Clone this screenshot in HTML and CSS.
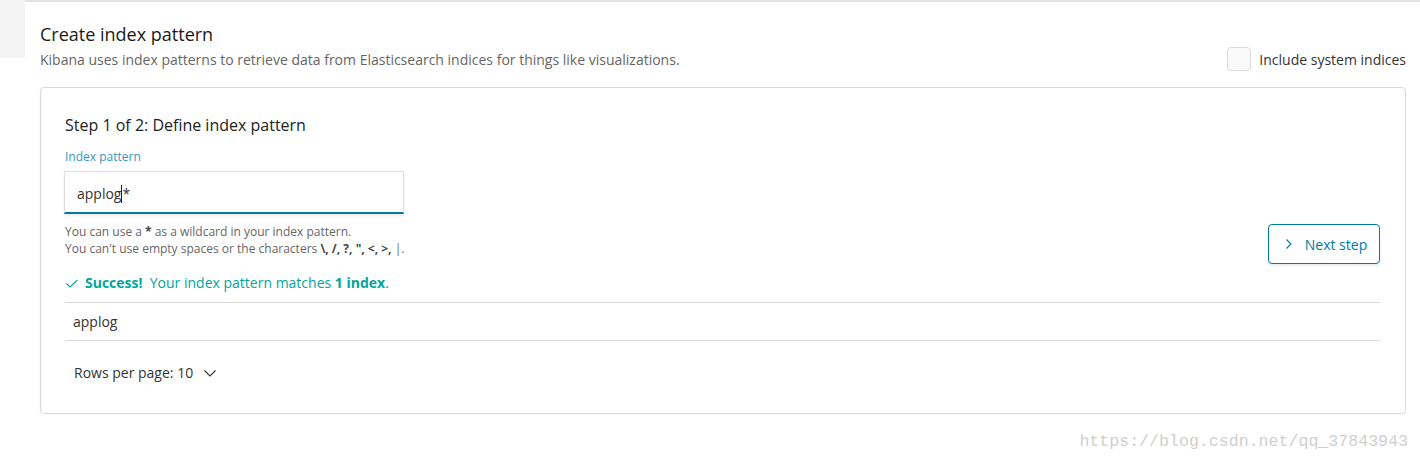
FILE: index.html
```html
<!DOCTYPE html>
<html lang="en">
<head>
  <meta charset="UTF-8" />
  <title>Create index pattern</title>
  <link rel="stylesheet" href="styles.css">
</head>
<body>
  <div class="page">
    <div class="nav-stub"></div>

    <main class="content">
      <header class="page-header">
        <div>
          <h1 class="page-title">Create index pattern</h1>
          <p class="page-desc">Kibana uses index patterns to retrieve data from Elasticsearch indices for things like visualizations.</p>
        </div>
        <label class="checkbox">
          <span class="checkbox-box"></span>
          <span>Include system indices</span>
        </label>
      </header>

      <section class="panel">
        <h2 class="step-title">Step 1 of 2: Define index pattern</h2>

        <div class="step-row">
          <div class="form-row">
            <div class="field-label">Index pattern</div>
            <div class="field-input">applog<span class="caret"></span>*</div>
            <div class="field-help">
              You can use a <b>*</b> as a wildcard in your index pattern.<br>
              You can't use empty spaces or the characters <b>\, /, ?, ", &lt;, &gt;,</b> |.
            </div>
          </div>
          <button class="next-btn">
            <svg width="16" height="16" viewBox="0 0 16 16"><path d="M5.5 3.5 L10 8 L5.5 12.5" fill="none" stroke="currentColor" stroke-width="1.1"/></svg>
            <span>Next step</span>
          </button>
        </div>

        <div class="status">
          <svg width="14" height="14" viewBox="0 0 14 14"><path d="M1.5 7.5 L5 11 L12.5 4" fill="none" stroke="currentColor" stroke-width="1.1"/></svg>
          <b>Success!</b>&nbsp; Your index pattern matches&nbsp;<b>1 index</b>.
        </div>

        <div class="index-table">
          <div class="index-row">applog</div>
        </div>

        <div class="pagination">
          Rows per page: 10
          <svg width="14" height="10" viewBox="0 0 14 10"><path d="M1.5 2.5 L7 8 L12.5 2.5" fill="none" stroke="currentColor" stroke-width="1.1"/></svg>
        </div>
      </section>
    </main>
  </div>

  <div class="watermark">https://blog.csdn.net/qq_37843943</div>
</body>
</html>
```

FILE: styles.css
```css
body {
  margin: 0;
  font-family: 'Open Sans', sans-serif;
  background: #fff;
  color: #333;
}
.page {
  display: flex;
  align-items: flex-start;
}
.nav-stub {
  width: 25px;
  height: 58px;
  background: #f3f3f3;
  flex-shrink: 0;
}
.content {
  flex: 1;
  border-top: 2px solid #e2e2e2;
  padding: 20px 14px 0 15px;
}
.page-header {
  display: flex;
  justify-content: space-between;
  align-items: flex-end;
}
.page-title {
  margin: 0;
  font-size: 18px;
  line-height: 24px;
  font-weight: 400;
  color: #1a1a1a;
}
.page-desc {
  margin: 4px 0 0;
  font-size: 14px;
  line-height: 20px;
  color: #666;
}
.checkbox {
  display: flex;
  align-items: center;
  gap: 8px;
  font-size: 14px;
  color: #333;
  margin-bottom: -1px;
}
.checkbox-box {
  width: 22px;
  height: 22px;
  border: 1px solid #dcdcdc;
  border-radius: 4px;
  background: #fafafa;
}
.panel {
  margin-top: 17px;
  border: 1px solid #d9d9d9;
  border-radius: 4px;
  box-shadow: 0 1px 2px rgba(0, 0, 0, 0.06);
  padding: 25px 25px 30px 24px;
}
.step-title {
  margin: 0 0 11px;
  font-size: 16px;
  line-height: 24px;
  font-weight: 400;
  color: #222;
}
.step-row {
  display: flex;
  justify-content: space-between;
  align-items: flex-end;
}
.form-row {
  padding-bottom: 7px;
}
.field-label {
  font-size: 12px;
  line-height: 18px;
  color: #3896c0;
  margin-bottom: 5px;
}
.field-input {
  width: 326px;
  height: 36px;
  padding: 4px 0 0 12px;
  margin-left: -1px;
  border: 1px solid #dedede;
  border-bottom: 2px solid #0079a5;
  box-shadow: 0 2px 3px rgba(0, 0, 0, 0.08);
  font-size: 14px;
  line-height: 36px;
  color: #333;
}
.caret {
  display: inline-block;
  width: 0;
  height: 18px;
  border-left: 1px solid #222;
  vertical-align: -4px;
}
.field-help {
  margin-top: 9px;
  font-size: 12px;
  line-height: 17px;
  color: #666;
}
.field-help b {
  color: #444;
}
.next-btn {
  display: inline-flex;
  align-items: center;
  justify-content: center;
  gap: 8px;
  box-sizing: border-box;
  width: 112px;
  height: 40px;
  padding: 0 8px;
  white-space: nowrap;
  background: #fff;
  border: 1px solid #0079a5;
  border-radius: 4px;
  box-shadow: 0 2px 2px rgba(0, 0, 0, 0.08);
  color: #0079a5;
  font-family: 'Open Sans', sans-serif;
  font-size: 14px;
}
.status {
  display: flex;
  align-items: center;
  margin-top: 9px;
  font-size: 14px;
  line-height: 20px;
  color: #00a69b;
}
.status svg {
  margin-right: 6px;
}
.status b {
  font-weight: 700;
}
.index-table {
  margin-top: 9px;
  border-top: 1px solid #d9d9d9;
  border-bottom: 1px solid #d9d9d9;
}
.index-row {
  padding: 9px 8px 8px;
  font-size: 14px;
  line-height: 20px;
  color: #333;
}
.pagination {
  display: flex;
  align-items: center;
  gap: 10px;
  margin-top: 22px;
  padding-left: 9px;
  font-size: 14px;
  line-height: 20px;
  color: #333;
}
.watermark {
  position: absolute;
  top: 432px;
  right: 12px;
  font-family: 'Liberation Mono', monospace;
  font-size: 16.6px;
  color: #cfcfcf;
}
```
